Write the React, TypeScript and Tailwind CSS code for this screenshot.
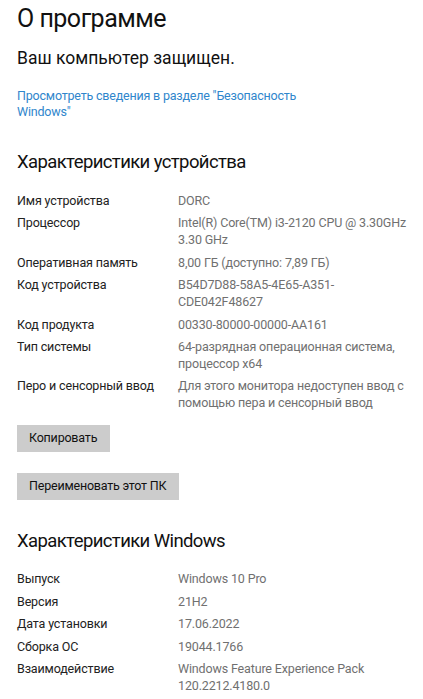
const font = { fontFamily: 'Roboto, "Noto Sans", sans-serif' };

type Row = { label: string; value: string[] };

const device: Row[] = [
  { label: "Имя устройства", value: ["DORC"] },
  { label: "Процессор", value: ["Intel(R) Core(TM) i3-2120 CPU @ 3.30GHz", "3.30 GHz"] },
  { label: "Оперативная память", value: ["8,00 ГБ (доступно: 7,89 ГБ)"] },
  { label: "Код устройства", value: ["B54D7D88-58A5-4E65-A351-", "CDE042F48627"] },
  { label: "Код продукта", value: ["00330-80000-00000-AA161"] },
  { label: "Тип системы", value: ["64-разрядная операционная система,", "процессор x64"] },
  { label: "Перо и сенсорный ввод", value: ["Для этого монитора недоступен ввод с", "помощью пера и сенсорный ввод"] },
];

const windows: Row[] = [
  { label: "Выпуск", value: ["Windows 10 Pro"] },
  { label: "Версия", value: ["21H2"] },
  { label: "Дата установки", value: ["17.06.2022"] },
  { label: "Сборка ОС", value: ["19044.1766"] },
  { label: "Взаимодействие", value: ["Windows Feature Experience Pack", "120.2212.4180.0"] },
];

function Specs({ rows, gap }: { rows: Row[]; gap: string }) {
  return (
    <div className={`flex flex-col ${gap}`}>
      {rows.map((r) => (
        <div key={r.label} className="flex text-[12.5px] leading-[17px] tracking-[-0.15px]">
          <div className="w-[161px] shrink-0 text-[#222]">{r.label}</div>
          <div className="whitespace-nowrap text-[#707070]">
            {r.value.map((v) => (
              <div key={v}>{v}</div>
            ))}
          </div>
        </div>
      ))}
    </div>
  );
}

export default function App() {
  return (
    <div className="min-h-[699px] w-[423px] overflow-hidden bg-white px-[17px] text-black" style={font}>
      <h1 className="pt-[2px] text-[25px] leading-[34px] tracking-[-0.5px] text-[#111]">О программе</h1>
      <p className="mt-[10px] text-[17.5px] leading-[24px] text-[#111]">Ваш компьютер защищен.</p>
      <a className="mt-[18px] block w-[300px] text-[12.5px] leading-[16px] tracking-[-0.2px] text-[#2f86cc]">
        Просмотреть сведения в разделе "Безопасность Windows"
      </a>

      <h2 className="mt-[29px] text-[18.5px] leading-[26px] tracking-[-0.6px] text-[#111]">
        Характеристики устройства
      </h2>
      <div className="mt-[17px]">
        <Specs rows={device} gap="gap-[5.4px]" />
      </div>

      <button className="mt-[14px] block h-[27px] bg-[#cccccc] pl-[12px] pr-[13px] text-[12.5px] tracking-[-0.2px] text-[#111]">
        Копировать
      </button>
      <button className="mt-[21px] block h-[27px] bg-[#cccccc] pl-[12px] pr-[13px] text-[12.5px] tracking-[-0.2px] text-[#111]">
        Переименовать этот ПК
      </button>

      <h2 className="mt-[28px] text-[18.5px] leading-[26px] tracking-[-0.6px] text-[#111]">
        Характеристики Windows
      </h2>
      <div className="mt-[16px]">
        <Specs rows={windows} gap="gap-[5.5px]" />
      </div>
    </div>
  );
}
